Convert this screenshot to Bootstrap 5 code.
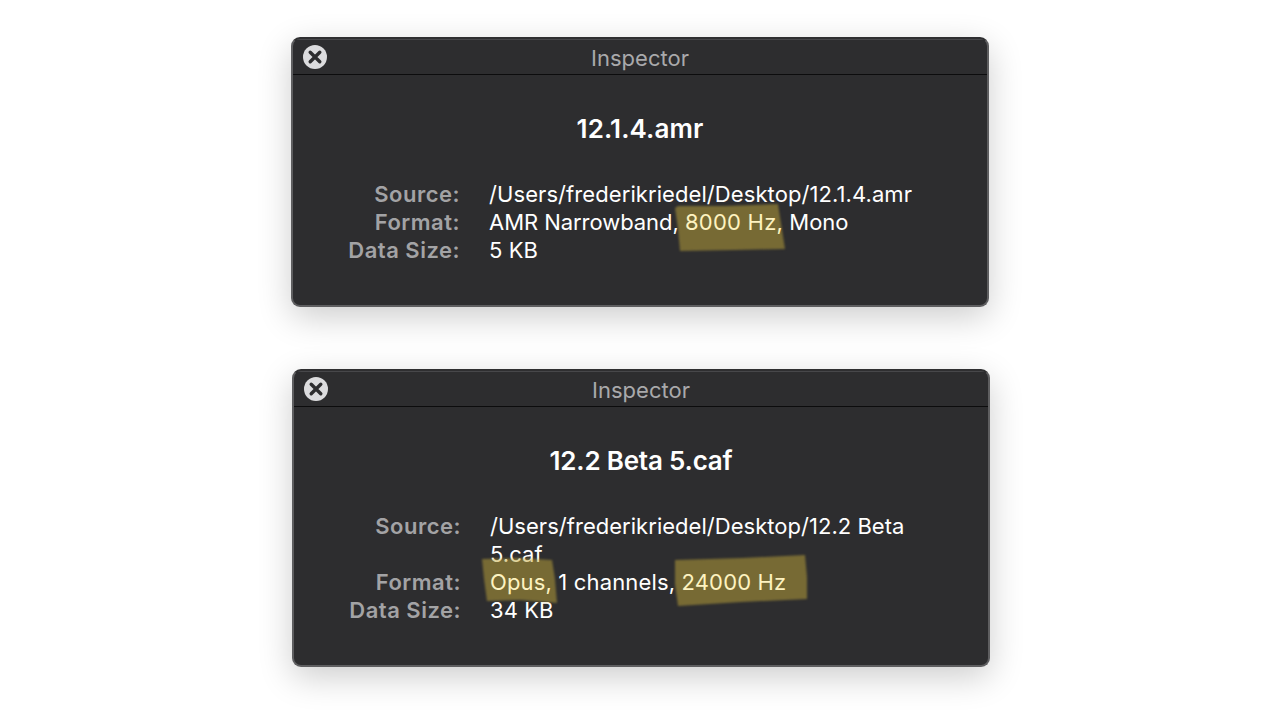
<!DOCTYPE html>
<html lang="en"><head><meta charset="utf-8"><title>Inspector</title>
<link href="https://cdn.jsdelivr.net/npm/bootstrap@5.3.0/dist/css/bootstrap.min.css" rel="stylesheet">
<style>
html,body{height:720px;overflow:hidden}
body{background:#fff;font-family:Inter,"Liberation Sans",sans-serif;color:#fff}
.stage{padding-top:37px;gap:62px}
.insp{width:698px;background:#2d2d2f;border:2px solid #5e5e60;border-top-color:#2f2f31;border-radius:9px;box-shadow:0 10px 34px rgba(0,0,0,.2);overflow:hidden}
.insp-a{height:270px;margin-left:291px}
.insp-b{height:298px;margin-left:292px}
.bar{height:37px;border-bottom:1px solid #0c0c0d;border-top:2px solid #47474a;margin:-1px -1px 0}
.bar svg{margin-left:11px;flex:none}
.bar-title{font-size:22px;color:#a9a9ab;left:0;right:0;line-height:36px;top:0}
.fname{font-size:26px;font-weight:600;line-height:30px;margin-top:39px;margin-bottom:36px;letter-spacing:.1px}
.insp-b .fname{letter-spacing:-.2px}
.props{display:grid;grid-template-columns:167px 1fr;column-gap:29px;font-size:22px;line-height:28px;padding-right:70px;letter-spacing:.08px}
.props dt{font-weight:600;color:#a3a3a5;text-align:right;margin:0;letter-spacing:.5px}
.props dd{margin:0}
.insp-a dd:nth-of-type(2){letter-spacing:-.05px}
.insp-a dd:nth-of-type(2) .hl{letter-spacing:.25px}
.insp-b dd:nth-of-type(1){letter-spacing:.03px}
.insp-b dd:nth-of-type(2){letter-spacing:.15px}
.hl{color:#fdf2c0;z-index:0}
.hl svg{left:0;top:0;z-index:-1;position:absolute;overflow:visible}
.hl polygon{fill:rgba(194,168,58,.5);filter:blur(.8px)}
</style></head><body>
<div class="stage d-flex flex-column">
<section class="insp insp-a position-relative">
 <div class="bar d-flex align-items-center position-relative">
  <svg width="24" height="24" viewBox="0 0 24 24"><circle cx="12" cy="12" r="12" fill="#dcdcde"/><path d="M7.2 7.2 16.8 16.8M16.8 7.2 7.2 16.8" stroke="#2d2d2f" stroke-width="3.4" stroke-linecap="round"/></svg>
  <div class="bar-title position-absolute text-center">Inspector</div>
 </div>
 <div class="fname text-center">12.1.4.amr</div>
 <dl class="props mb-0">
  <dt>Source:</dt><dd>/Users/frederikriedel/Desktop/12.1.4.amr</dd>
  <dt>Format:</dt><dd>AMR Narrowband, <span class="hl position-relative"><svg width="100" height="28" viewBox="0 0 100 28"><polygon points="-10,-1 -7,-3 40,-3 93,-5 95,8 100,40 50,41 -5,42 -7,20"/></svg>8000 Hz,</span> Mono</dd>
  <dt>Data Size:</dt><dd>5 KB</dd>
 </dl>
</section>
<section class="insp insp-b position-relative">
 <div class="bar d-flex align-items-center position-relative">
  <svg width="24" height="24" viewBox="0 0 24 24"><circle cx="12" cy="12" r="12" fill="#dcdcde"/><path d="M7.2 7.2 16.8 16.8M16.8 7.2 7.2 16.8" stroke="#2d2d2f" stroke-width="3.4" stroke-linecap="round"/></svg>
  <div class="bar-title position-absolute text-center">Inspector</div>
 </div>
 <div class="fname text-center">12.2 Beta 5.caf</div>
 <dl class="props mb-0">
  <dt>Source:</dt><dd>/Users/frederikriedel/Desktop/12.2 Beta<br>5.caf</dd>
  <dt>Format:</dt><dd><span class="hl position-relative"><svg width="60" height="28" viewBox="0 0 60 28"><polygon points="-8,-10 30,-11 62,-9 65,10 67,34 30,31 -3,32 -6,10"/></svg>Opus,</span> 1 channels, <span class="hl position-relative"><svg width="110" height="28" viewBox="0 0 110 28"><polygon points="-7,-9 60,-11 123,-14 125,8 125,30 60,33 -4,37 -7,15"/></svg>24000 Hz</span></dd>
  <dt>Data Size:</dt><dd>34 KB</dd>
 </dl>
</section>
</div>
<script src="https://cdn.jsdelivr.net/npm/bootstrap@5.3.0/dist/js/bootstrap.bundle.min.js"></script>
</body></html>
